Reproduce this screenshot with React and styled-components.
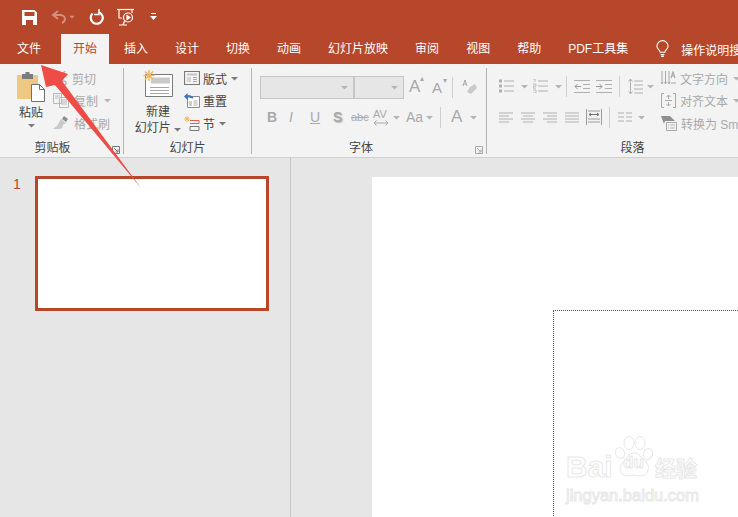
import React from 'react';
import styled, { createGlobalStyle } from 'styled-components';

const GlobalStyle = createGlobalStyle`
  html, body { margin: 0; padding: 0; background: #e6e6e6; }
  body { font-family: "Liberation Sans", "Noto Sans CJK SC", sans-serif; }
`;

const accent = '#b7472a';
const off = '#a9a9a9';

const Tri = ({ color = '#7a7a7a', size = 5 }) => (
  <svg width={size + 2} height={size} viewBox="0 0 7 5"><path d="M0 1h7L3.5 4.5z" fill={color} /></svg>
);

const SaveIcon = () => (
  <svg width="15" height="15" viewBox="0 0 15 15"><path d="M0 0h12.500L15 2.500V15H0z M2.500 2v4h10V2z M4 10v5h7v-5z" fill="#fff" fillRule="evenodd" /></svg>
);
const UndoIcon = () => (
  <svg width="16" height="14" viewBox="0 0 16 14" fill="none" stroke="#d48f7c" strokeWidth="2"><path d="M7 1L2 5l5 4" /><path d="M2 5h7c3 0 5 2 5 4s-1 3-3 4" /></svg>
);
const RedoIcon = () => (
  <svg width="15" height="16" viewBox="0 0 15 16" fill="none" stroke="#fff" strokeWidth="2.200"><path d="M3.500 4.500a6 6 0 1 0 6.500-1.300" /><path d="M10 0v5.500H5" strokeWidth="1.600" /></svg>
);
const ShowIcon = () => (
  <svg width="18" height="18" viewBox="0 0 18 18" fill="none" stroke="#fff" strokeWidth="1.200"><path d="M0 1.500h17" /><path d="M2 2v8h3M15 2v3" /><circle cx="11" cy="9.500" r="4.500" /><path d="M10 7.500l3 2-3 2z" fill="#fff" /><path d="M6 17l2-5M2 17h8" /></svg>
);
const QatMore = () => (
  <svg width="7" height="8" viewBox="0 0 7 8" fill="#fff"><path d="M1 0h5v1H1zM0 3h7L3.500 7z" /></svg>
);
const BulbIcon = () => (
  <svg width="13" height="18" viewBox="0 0 14 18" fill="none" stroke="#fff" strokeWidth="1.200"><path d="M4.500 12.500C4 10 1 9 1 6a6 6 0 0 1 12 0c0 3-3 4-3.500 6.500z" /><path d="M5 15h4M5.500 17h3" /></svg>
);
const PasteIcon = () => (
  <svg width="28" height="30" viewBox="0 0 28 30">
    <path d="M0 3h21v24H0z" fill="#eec782" />
    <path d="M5 2h11v5H5z" fill="#7b7b7b" /><path d="M8.500 0h4v3h-4z" fill="#7b7b7b" />
    <path d="M14.500 12.500h8l5 5v12h-13z" fill="#fff" stroke="#6f6f6f" />
    <path d="M22.500 12.500v5h5" fill="none" stroke="#6f6f6f" />
  </svg>
);
const CutIcon = () => (
  <svg width="14" height="15" viewBox="0 0 14 15" fill="none" stroke="#b8b8b8" strokeWidth="1.600"><path d="M2 0l8 10M12 0L4 10" /><circle cx="3" cy="12" r="2" /><circle cx="11" cy="12" r="2" /></svg>
);
const CopyIcon = () => (
  <svg width="16" height="15" viewBox="0 0 16 15" fill="#f3f3f3" stroke="#b8b8b8"><path d="M.5.5h8v10h-8zM6.500 4.500h9v10h-9z" /><path d="M2 3h5M2 5h3M8 7h6M8 9h6M8 11h6" /></svg>
);
const BrushIcon = () => (
  <svg width="16" height="14" viewBox="0 0 16 14"><path d="M11 0l4 3-2 3-4-3z" fill="#8e8e8e" /><path d="M8 3l5 4-3 2-1 3-2 1-7 0 4-3z" fill="#c9c9c9" /></svg>
);
const NewSlideIcon = () => (
  <svg width="30" height="28" viewBox="0 0 30 28">
    <path d="M2.500 4.500h27v22h-27z" fill="#fff" stroke="#7a7a7a" />
    <path d="M8 7.500h19v6H8z" fill="#c9c9c9" /><path d="M7 17.500h19M7 20.500h19M7 23.500h19" stroke="#a5a5a5" />
    <g stroke="#f0b95a" strokeWidth="1.500"><path d="M6 0v11M.5 5.500h11M2 1.500l8 8M10 1.500l-8 8" /></g>
  </svg>
);
const LayoutIcon = () => (
  <svg width="16" height="14" viewBox="0 0 16 14" fill="none" stroke="#7a7a7a" strokeWidth="1.200"><path d="M.5.5h15v13H.5z" /><path d="M3 3.500h10" strokeWidth="2" stroke="#c4c4c4" /><path d="M3 6h4v5H3z" fill="#d5d5d5" stroke="none" /><path d="M9 6.500h4M9 8.500h4M9 10.500h4" stroke="#aaa" strokeWidth="1" /></svg>
);
const ResetIcon = () => (
  <svg width="16" height="15" viewBox="0 0 16 15" fill="none"><path d="M3.500 3.500h12v11h-12z" stroke="#8a8a8a" fill="#fff" /><path d="M5 8h3v5H5z" fill="#ccc" /><path d="M9.500 8h4M9.500 10h4M9.500 12h4" stroke="#aaa" /><path d="M0 3.500L3.500 0v2c3.500 0 5.500 1 6 4-1.500-1-3.500-1.500-6-1.500V7z" fill="#3a78b8" /></svg>
);
const SectionIcon = () => (
  <svg width="16" height="15" viewBox="0 0 16 15" fill="none"><path d="M3 0v6M0 3h6M1 1l4 4M5 1L1 5" stroke="#f0b95a" /><path d="M6 4.500h9M15 4.500v3M6 7.500h9" stroke="#d3674a" /><path d="M6 10.500h9v4H6z" stroke="#7a7a7a" /></svg>
);
const Launcher = ({ color = '#7a7a7a' }) => (
  <svg width="8" height="8" viewBox="0 0 8 8" fill="none" stroke={color}><path d="M.5 7.500v-7h7v7z" /><path d="M2 2l4 4M6 3.500V6H3.500" /></svg>
);
const ListLines = ({ numbered }) => (
  <svg width="15" height="14" viewBox="0 0 15 14" fill="none" stroke="#b0b0b0">
    <path d="M5 2h10M5 7h10M5 12h10" />
    {numbered
      ? <path d="M0 0h2v3M0 5h3v2H0v2h3M0 11h3v3H0" strokeWidth=".8" />
      : <path d="M0 2h3M0 7h3M0 12h3" strokeWidth="3" />}
  </svg>
);
const IndentIcon = ({ inward }) => (
  <svg width="16" height="13" viewBox="0 0 16 13" fill="none" stroke="#b0b0b0">
    <path d="M0 .5h16M9 4.500h7M9 8.500h7M0 12.500h16" />
    <path d={inward ? 'M0 6.500h6M3.500 4L6 6.500 3.500 9' : 'M7 6.500H1M3.500 4L1 6.500 3.500 9'} stroke="#9a9a9a" />
  </svg>
);
const LineSpace = () => (
  <svg width="15" height="17" viewBox="0 0 15 17" fill="none" stroke="#b0b0b0"><path d="M6 3h9M6 7h9M6 11h9M6 15h9" /><path d="M2.500 1v15M.5 3.500l2-2.500 2 2.500M.5 13.500l2 2.500 2-2.500" /></svg>
);
const AlignIcon = ({ kind }) => {
  const rows = kind === 'full' ? [14, 14, 14, 14] : [14, 10, 14, 10];
  return (
    <svg width="14" height="11" viewBox="0 0 14 11" stroke="#b0b0b0">
      {rows.map((w, i) => {
        const x = kind === 'right' ? 14 - w : kind === 'center' ? (14 - w) / 2 : 0;
        return <path key={i} d={`M${x} ${i * 3 + 1}h${w}`} />;
      })}
    </svg>
  );
};
const DistIcon = () => (
  <svg width="16" height="16" viewBox="0 0 16 16" fill="none" stroke="#9c9c9c"><path d="M.5 0v16M15.500 0v16M2 2h12M2 13h12M2 10h12" /><path d="M3 5.500h10M5 4L3 5.500 5 7M11 4l2 1.500L11 7" stroke="#777" /></svg>
);
const ColumnsIcon = () => (
  <svg width="14" height="10" viewBox="0 0 14 10" stroke="#b0b0b0"><path d="M0 1h6M8 1h6M0 5h6M8 5h6M0 9h6M8 9h6" /></svg>
);
const TextDirIcon = () => (
  <svg width="15" height="15" viewBox="0 0 15 15" fill="none" stroke="#a9a9a9"><path d="M1 0v12M4.500 0v12M8 0v12" /><path d="M0 11l1 2 1-2M3.500 11l1 2 1-2M7 11l1 2 1-2" /><path d="M10 7l2-6 2 6M11 5h2" strokeWidth="1.200" /><path d="M10 12h5" /></svg>
);
const AlignTextIcon = () => (
  <svg width="15" height="15" viewBox="0 0 15 15" fill="none" stroke="#a9a9a9"><path d="M3 .5H.5v14H3M12 .5h2.500v14H12" /><path d="M7.500 2v4M5.500 4l2-2 2 2M7.500 13V9M5.500 11l2 2 2-2M4 7.500h7" /></svg>
);
const SmartArtIcon = () => (
  <svg width="16" height="15" viewBox="0 0 16 15" fill="none"><path d="M0 0h9l5 5H4l-1 3z" fill="#8f8f8f" /><path d="M5.500 6.500h10v8h-10z" stroke="#a9a9a9" fill="#f3f3f3" /><path d="M7 9h1M7 12h1M9 9h5M9 12h5" stroke="#b5b5b5" /></svg>
);
const EraserIcon = () => (
  <svg width="15" height="15" viewBox="0 0 15 15"><path d="M8 7l5-3 2 4-6 6-4-2z" fill="#c9c9c9" /><path d="M1 6l2-6 2 6M1.800 4h2.400" fill="none" stroke="#a9a9a9" /></svg>
);
const SpacingArrow = () => (
  <svg width="16" height="6" viewBox="0 0 16 6" fill="none" stroke={off}><path d="M1 3h14M3.500 .5L1 3l2.500 2.500M12.500 .5L15 3l-2.500 2.500" /></svg>
);
const PawIcon = () => (
  <svg width="40" height="44" viewBox="0 0 40 44" fill="#fff" stroke="#e8e8e8" strokeWidth="1">
    <ellipse cx="6" cy="17" rx="4.500" ry="5.500" transform="rotate(-25 6 17)" />
    <ellipse cx="15" cy="7" rx="5" ry="6.500" />
    <ellipse cx="26" cy="7" rx="5" ry="6.500" />
    <ellipse cx="34" cy="18" rx="4.500" ry="5.500" transform="rotate(20 34 18)" />
    <path d="M20 17c6 0 7 5 12 9 5 5 2 14-6 14-2 0-4-1-6-1s-4 1-7 1c-7-1-9-8-5-13 5-4 6-10 12-10z" />
  </svg>
);

const tabs = ['插入', '设计', '切换', '动画', '幻灯片放映', '审阅', '视图', '帮助', 'PDF工具集'];

export default function App() {
  return (
    <Page>
      <GlobalStyle />
      <TitleBar>
        <QatSlot $w={16}><SaveIcon /></QatSlot>
        <QatSlot $w={25}><UndoIcon /><Tri color="#d48f7c" size={4} /></QatSlot>
        <QatSlot $w={15}><RedoIcon /></QatSlot>
        <QatSlot $w={20}><ShowIcon /></QatSlot>
        <QatSlot $w={7}><QatMore /></QatSlot>
      </TitleBar>

      <TabBar>
        <Tab $first>文件</Tab>
        <Tab $active>开始</Tab>
        {tabs.map((t) => <Tab key={t}>{t}</Tab>)}
        <Tell><BulbIcon /><span>操作说明搜索</span></Tell>
      </TabBar>

      <Ribbon>
        <Group $w={124}>
          <GroupBody $left={17}>
            <BigButton $w={28} $top={4}>
              <PasteIcon />
              <BigLabel $top={3}>粘贴</BigLabel>
              <CaretSlot><Tri /></CaretSlot>
            </BigButton>
            <SmallColumn $left={8} $gap={5}>
              <SmallRow><CutIcon /><OffText>剪切</OffText></SmallRow>
              <SmallRow><CopyIcon /><OffText>复制</OffText><Tri color="#b5b5b5" /></SmallRow>
              <SmallRow><BrushIcon /><OffText>格式刷</OffText></SmallRow>
            </SmallColumn>
          </GroupBody>
          <GroupFoot $padR={18}>剪贴板<LauncherSlot><Launcher /></LauncherSlot></GroupFoot>
        </Group>

        <Group $w={128}>
          <GroupBody $left={8}>
            <BigButton $w={52} $top={2}>
              <NewSlideIcon />
              <BigLabel $top={6}>新建</BigLabel>
              <BigLabel>幻灯片 <Tri /></BigLabel>
            </BigButton>
            <SmallColumn $left={0} $gap={3}>
              <SmallRow><LayoutIcon /><OnText>版式</OnText><Tri /></SmallRow>
              <SmallRow><ResetIcon /><OnText>重置</OnText></SmallRow>
              <SmallRow><SectionIcon /><OnText>节</OnText><Tri /></SmallRow>
            </SmallColumn>
          </GroupBody>
          <GroupFoot>幻灯片</GroupFoot>
        </Group>

        <Group $w={235}>
          <FontBody>
            <FontRow>
              <Combo $w={94}><Tri color="#b5b5b5" /></Combo>
              <Combo $w={50}><Tri color="#b5b5b5" /></Combo>
              <GlyphBtn $w={18} $size={17} $left={5}>A<Sup>▴</Sup></GlyphBtn>
              <GlyphBtn $w={18} $size={15} $left={5}>A<Sup>▾</Sup></GlyphBtn>
              <RowSep $left={2} />
              <IconSlot $left={9}><EraserIcon /></IconSlot>
            </FontRow>
            <FontRow $left={7}>
              <GlyphBtn $w={22} $size={14} $bold>B</GlyphBtn>
              <GlyphBtn $w={21} $size={14} $italic>I</GlyphBtn>
              <GlyphBtn $w={23} $size={14} $under>U</GlyphBtn>
              <GlyphBtn $w={18} $size={14} $bold $shadow>S</GlyphBtn>
              <GlyphBtn $w={22} $size={11} $strike>abc</GlyphBtn>
              <SpacingBtn>AV<SpacingArrow /></SpacingBtn>
              <Tri color="#b5b5b5" />
              <GlyphBtn $w={20} $size={14} $left={6}>Aa</GlyphBtn>
              <Tri color="#b5b5b5" />
              <RowSep $left={7} />
              <GlyphBtn $w={18} $size={17} $left={10}>A</GlyphBtn>
              <IconSlot $left={1}><Tri color="#b5b5b5" /></IconSlot>
            </FontRow>
          </FontBody>
          <GroupFoot $padR={16}>字体<LauncherSlot><Launcher color="#aaa" /></LauncherSlot></GroupFoot>
        </Group>

        <Group $w={251} $last>
          <ParaBody>
            <ParaLeft>
              <FontRow>
                <ListLines /><IconSlot $left={7}><Tri color="#b5b5b5" /></IconSlot>
                <IconSlot $left={5}><ListLines numbered /></IconSlot><IconSlot $left={7}><Tri color="#b5b5b5" /></IconSlot>
                <RowSep $left={4} />
                <IconSlot $left={7}><IndentIcon /></IconSlot>
                <IconSlot $left={6}><IndentIcon inward /></IconSlot>
                <RowSep $left={7} />
                <IconSlot $left={8}><LineSpace /></IconSlot><IconSlot $left={4}><Tri color="#b5b5b5" /></IconSlot>
              </FontRow>
              <FontRow>
                <AlignIcon kind="left" />
                <IconSlot $left={8}><AlignIcon kind="center" /></IconSlot>
                <IconSlot $left={8}><AlignIcon kind="right" /></IconSlot>
                <IconSlot $left={8}><AlignIcon kind="full" /></IconSlot>
                <IconSlot $left={7}><DistIcon /></IconSlot>
                <RowSep $left={7} />
                <IconSlot $left={8}><ColumnsIcon /></IconSlot><IconSlot $left={6}><Tri color="#b5b5b5" /></IconSlot>
              </FontRow>
            </ParaLeft>
            <SmallColumn $left={5} $gap={4}>
              <SmallRow><TextDirIcon /><OffText>文字方向</OffText><Tri color="#b5b5b5" /></SmallRow>
              <SmallRow><AlignTextIcon /><OffText>对齐文本</OffText><Tri color="#b5b5b5" /></SmallRow>
              <SmallRow><SmartArtIcon /><OffText>转换为 SmartArt</OffText></SmallRow>
            </SmallColumn>
          </ParaBody>
          <GroupFoot $padL={40}>段落</GroupFoot>
        </Group>
      </Ribbon>

      <Workspace>
        <ThumbPane>
          <SlideNo>1</SlideNo>
          <Thumb />
        </ThumbPane>
        <Canvas>
          <Slide>
            <Placeholder />
          </Slide>
        </Canvas>
      </Workspace>

      <ArrowLayer width="738" height="517" viewBox="0 0 738 517">
        <polygon points="41,65 68,74 62,81 141,188 55,85 46,87" fill="#ef4b47" />
      </ArrowLayer>

      <Watermark>
        <PawSlot><PawIcon /><PawText>du</PawText></PawSlot>
        <MarkRow><MarkBig>Bai</MarkBig><MarkCjk>经验</MarkCjk></MarkRow>
        <MarkUrl>jingyan.baidu.com</MarkUrl>
      </Watermark>
    </Page>
  );
}

const Page = styled.div`
  position: relative;
  width: 738px;
  height: 517px;
  overflow: hidden;
  display: flex;
  flex-direction: column;
  background: #e6e6e6;
`;

const TitleBar = styled.div`
  height: 34px;
  background: ${accent};
  display: flex;
  align-items: center;
  padding: 0 0 0 22px;
  gap: 13px;
`;

const QatSlot = styled.div`
  width: ${(p) => p.$w}px;
  display: flex;
  align-items: center;
  gap: 2px;
`;

const TabBar = styled.div`
  height: 30px;
  background: ${accent};
  display: flex;
  padding-left: 5px;
  gap: 3px;
  white-space: nowrap;
`;

const Tab = styled.div`
  padding: 0 12px;
  font-size: 12px;
  line-height: 30px;
  color: ${(p) => (p.$active ? accent : '#fff')};
  background: ${(p) => (p.$active ? '#f3f3f3' : 'transparent')};
  margin-right: ${(p) => (p.$first ? 5 : 0)}px;
`;

const Tell = styled.div`
  display: flex;
  align-items: center;
  gap: 12px;
  margin-left: 13px;
  font-size: 12px;
  color: #fff;
`;

const Ribbon = styled.div`
  height: 86px;
  background: #f3f3f3;
  border-bottom: 1px solid #d0d0d0;
  display: flex;
  padding: 4px 0 3px;
  box-sizing: content-box;
`;

const Group = styled.div`
  width: ${(p) => p.$w}px;
  flex: none;
  box-sizing: border-box;
  border-right: ${(p) => (p.$last ? 'none' : '1px solid #b4b4b4')};
  display: flex;
  flex-direction: column;
`;

const GroupBody = styled.div`
  flex: 1;
  min-height: 0;
  display: flex;
  padding-left: ${(p) => p.$left}px;
`;

const GroupFoot = styled.div`
  position: relative;
  flex: none;
  height: 18px;
  line-height: 24px;
  text-align: center;
  font-size: 12px;
  color: #444;
  padding-right: ${(p) => p.$padR || 0}px;
  padding-left: ${(p) => p.$padL || 0}px;
`;

const LauncherSlot = styled.span`
  position: absolute;
  right: 3px;
  bottom: 0;
  line-height: 0;
`;

const BigButton = styled.div`
  width: ${(p) => p.$w}px;
  padding-top: ${(p) => p.$top}px;
  display: flex;
  flex-direction: column;
  align-items: center;
  white-space: nowrap;
`;

const BigLabel = styled.div`
  font-size: 12px;
  line-height: 16px;
  color: #444;
  margin-top: ${(p) => p.$top || 0}px;
`;

const CaretSlot = styled.div`
  line-height: 0;
  margin-top: 2px;
`;

const SmallColumn = styled.div`
  margin-left: ${(p) => p.$left}px;
  margin-top: -1px;
  display: flex;
  flex-direction: column;
  white-space: nowrap;
  & > div { gap: ${(p) => p.$gap}px; }
`;

const SmallRow = styled.div`
  height: 22.500px;
  display: flex;
  align-items: center;
  span + svg { margin-left: 1px; }
`;

const OffText = styled.span`
  font-size: 12px;
  color: ${off};
`;

const OnText = styled.span`
  font-size: 12px;
  color: #444;
`;

const FontBody = styled.div`
  flex: 1;
  min-height: 0;
  padding: 7px 0 0 8px;
  display: flex;
  flex-direction: column;
  gap: 6px;
`;

const FontRow = styled.div`
  height: 24px;
  display: flex;
  align-items: center;
  margin-left: ${(p) => p.$left || 0}px;
`;

const Combo = styled.div`
  width: ${(p) => p.$w}px;
  height: 23px;
  box-sizing: border-box;
  background: #e6e6e6;
  border: 1px solid #c6c6c6;
  display: flex;
  align-items: center;
  justify-content: flex-end;
  padding-right: 5px;
`;

const GlyphBtn = styled.div`
  position: relative;
  width: ${(p) => p.$w}px;
  flex: none;
  margin-left: ${(p) => p.$left || 0}px;
  font-family: "Liberation Sans", sans-serif;
  font-size: ${(p) => p.$size || 12}px;
  font-weight: ${(p) => (p.$bold ? 700 : 400)};
  font-style: ${(p) => (p.$italic ? 'italic' : 'normal')};
  text-decoration: ${(p) => (p.$under ? 'underline' : p.$strike ? 'line-through' : 'none')};
  text-shadow: ${(p) => (p.$shadow ? '1px 1px 1px #bbb' : 'none')};
  color: ${off};
`;

const Sup = styled.span`
  position: absolute;
  top: -3px;
  left: 11px;
  font-size: 8px;
`;

const SpacingBtn = styled.div`
  width: 20px;
  flex: none;
  display: flex;
  flex-direction: column;
  align-items: flex-start;
  font-size: 11px;
  line-height: 11px;
  color: ${off};
`;

const RowSep = styled.div`
  width: 1px;
  height: 21px;
  flex: none;
  background: #cfcfcf;
  margin-left: ${(p) => p.$left}px;
`;

const IconSlot = styled.div`
  display: flex;
  align-items: center;
  flex: none;
  margin-left: ${(p) => p.$left}px;
`;

const ParaBody = styled.div`
  flex: 1;
  min-height: 0;
  display: flex;
  padding-left: 12px;
`;

const ParaLeft = styled.div`
  width: 157px;
  flex: none;
  display: flex;
  flex-direction: column;
  gap: 7px;
  padding-top: 6px;
`;

const Workspace = styled.div`
  flex: 1;
  min-height: 0;
  display: flex;
`;

const ThumbPane = styled.div`
  width: 277px;
  flex: none;
  border-right: 1px solid #c6c6c6;
  display: flex;
  align-items: flex-start;
  padding: 18px 0 0 13px;
`;

const SlideNo = styled.div`
  width: 22px;
  font-size: 14px;
  line-height: 16px;
  color: ${accent};
`;

const Thumb = styled.div`
  width: 234px;
  height: 135px;
  box-sizing: border-box;
  background: #fff;
  border: 3px solid ${accent};
`;

const Canvas = styled.div`
  flex: 1;
  padding: 19px 0 0 81px;
  overflow: hidden;
`;

const Slide = styled.div`
  height: 100%;
  background: #fff;
  padding: 133px 0 0 181px;
  box-sizing: border-box;
`;

const Placeholder = styled.div`
  height: 100%;
  border-left: 1px dotted #555;
  border-top: 1px dotted #555;
`;

const ArrowLayer = styled.svg`
  position: absolute;
  inset: 0;
  pointer-events: none;
`;

const Watermark = styled.div`
  position: absolute;
  left: 566px;
  top: 436px;
  width: 135px;
  height: 70px;
  font-family: "Liberation Sans", sans-serif;
  color: #fff;
  -webkit-text-stroke: 1px #e8e8e8;
`;

const PawSlot = styled.div`
  position: absolute;
  left: 48px;
  top: 0;
`;

const PawText = styled.span`
  position: absolute;
  left: 9px;
  top: 17px;
  font-size: 17px;
  font-weight: 700;
`;

const MarkRow = styled.div`
  display: flex;
  align-items: center;
  justify-content: space-between;
  width: 131px;
  padding-top: 14px;
`;

const MarkBig = styled.span`
  font-size: 30px;
  font-weight: 700;
  line-height: 34px;
`;

const MarkCjk = styled.span`
  font-family: "Noto Sans CJK SC", sans-serif;
  font-size: 21px;
  font-weight: 700;
  line-height: 34px;
`;

const MarkUrl = styled.div`
  font-size: 16.500px;
  line-height: 20px;
  margin-top: 1px;
`;
